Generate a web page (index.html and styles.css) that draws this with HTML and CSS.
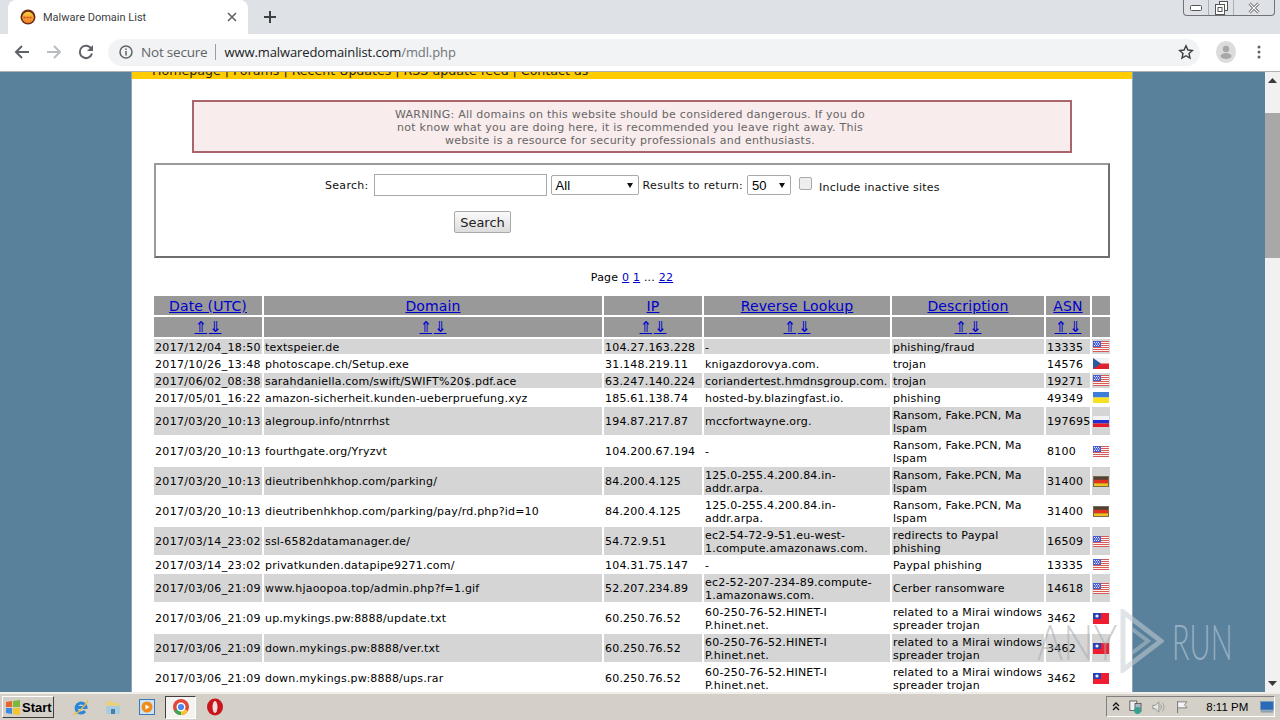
FILE: index.html
```html
<!DOCTYPE html>
<html lang="en">
<head>
<meta charset="utf-8">
<title>Malware Domain List</title>
<link rel="stylesheet" href="styles.css">
</head>
<body>
<svg class="defs" width="0" height="0">
  <defs>
    <linearGradient id="fav" x1="0" y1="0" x2="0" y2="1"><stop offset="0" stop-color="#f8d040"/><stop offset="1" stop-color="#ee7a28"/></linearGradient>
    <symbol id="us" viewBox="0 0 16 11"><rect width="16" height="11" fill="#f8f4f4"/><path d="M0 .5h16M0 2.500h16M0 4.500h16M0 6.500h16M0 8.500h16M0 10.500h16" stroke="#d85a58" stroke-width="1"/><rect width="8" height="6" fill="#4a5cd0"/><path d="M1 1.500h1M3 1.500h1M5 1.500h1M2 3h1M4 3h1M6 3h1M1 4.500h1M3 4.500h1M5 4.500h1" stroke="#e4e8ff"/></symbol>
    <symbol id="cz" viewBox="0 0 16 11"><rect width="16" height="5.500" fill="#f2f2f6"/><rect y="5.500" width="16" height="5.500" fill="#e0202c"/><path d="M0 0L8 5.500L0 11Z" fill="#2a5a9c"/></symbol>
    <symbol id="ua" viewBox="0 0 16 11"><rect width="16" height="5.500" fill="#3a80d8"/><rect y="5.500" width="16" height="5.500" fill="#f8e020"/></symbol>
    <symbol id="ru" viewBox="0 0 16 11"><rect width="16" height="4" fill="#f4f4f8"/><rect y="4" width="16" height="3.500" fill="#2030d0"/><rect y="7.500" width="16" height="3.500" fill="#e81c28"/></symbol>
    <symbol id="de" viewBox="0 0 16 11"><rect width="16" height="11" fill="#4a4436"/><rect y="3.700" width="16" height="3.600" fill="#e03020"/><rect y="7.300" width="16" height="3.700" fill="#f0c020"/><rect x=".5" y=".5" width="15" height="10" fill="none" stroke="#7a6a50"/></symbol>
    <symbol id="tw" viewBox="0 0 16 11"><rect width="16" height="11" fill="#f01c30"/><rect width="8" height="6" fill="#2a40b0"/><circle cx="4" cy="3" r="1.600" fill="#f0f0ff"/></symbol>
  </defs>
</svg>

<header class="chrome">
  <div class="tabstrip">
    <div class="tab">
      <svg class="favicon" width="16" height="16" viewBox="0 0 16 16"><circle cx="8" cy="8" r="7.500" fill="#6b2a12"/><circle cx="8" cy="8.500" r="5.800" fill="url(#fav)"/><path d="M3.500 8.500h9" stroke="#d63c20" stroke-width="1.500" stroke-dasharray="2 1"/></svg>
      <span class="tab-title">Malware Domain List</span>
      <svg class="tab-close" width="10" height="10" viewBox="0 0 10 10"><path d="M1 1l8 8M9 1l-8 8" stroke="#5f6368" stroke-width="1.600"/></svg>
    </div>
    <svg class="new-tab" width="12" height="12" viewBox="0 0 12 12"><path d="M6 0v12M0 6h12" stroke="#3c4043" stroke-width="2"/></svg>
    <div class="winctl">
      <span class="winbtn"><svg width="12" height="6" viewBox="0 0 12 6"><rect x=".5" y=".5" width="11" height="5" rx="1" fill="#fff" stroke="#555"/></svg></span>
      <span class="winbtn"><svg width="13" height="14" viewBox="0 0 13 14"><rect x="4.500" y=".5" width="8" height="9" fill="#fff" stroke="#555"/><rect x=".5" y="3.500" width="9" height="10" fill="#fff" stroke="#555"/><rect x="3" y="6.500" width="4" height="4" fill="none" stroke="#555"/></svg></span>
      <span class="winbtn winbtn-last"><svg width="12" height="12" viewBox="0 0 12 12"><path d="M1.500 1.500l9 9M10.500 1.500l-9 9" stroke="#555" stroke-width="2.800"/><path d="M1.500 1.500l9 9M10.500 1.500l-9 9" stroke="#fff" stroke-width="1.200"/></svg></span>
    </div>
  </div>
  <div class="toolbar">
    <svg class="tool" width="16" height="16" viewBox="0 0 16 16"><path d="M15 8H2M8 2L2 8l6 6" fill="none" stroke="#5f6368" stroke-width="2"/></svg>
    <svg class="tool" width="16" height="16" viewBox="0 0 16 16"><path d="M1 8h13M8 2l6 6-6 6" fill="none" stroke="#b9bcc0" stroke-width="2"/></svg>
    <svg class="tool" width="16" height="16" viewBox="0 0 16 16"><path d="M13.500 5A6.200 6.200 0 1 0 14 9.500" fill="none" stroke="#5f6368" stroke-width="2"/><path d="M15 1v6H9z" fill="#5f6368"/></svg>
    <div class="omnibox">
      <svg class="info" width="14" height="14" viewBox="0 0 14 14"><circle cx="7" cy="7" r="6" fill="none" stroke="#5f6368" stroke-width="1.500"/><path d="M7 6v4.500M7 3.500v1.500" stroke="#5f6368" stroke-width="1.500"/></svg>
      <span class="not-secure">Not secure</span>
      <span class="omni-sep"></span>
      <span class="url">www.malwaredomainlist.com<span class="url-path">/mdl.php</span></span>
      <svg class="star" width="16" height="16" viewBox="0 0 16 16"><path d="M8 1.800l1.900 4.200 4.500.5-3.400 3 1 4.500L8 11.700 4 14l1-4.500-3.400-3 4.500-.5z" fill="none" stroke="#3c4043" stroke-width="1.400"/></svg>
    </div>
    <svg class="avatar" width="20" height="22" viewBox="0 0 20 22"><ellipse cx="10" cy="11" rx="10" ry="11" fill="#dcdcdc"/><circle cx="10" cy="8" r="3.200" fill="#a8a8a8"/><ellipse cx="10" cy="15" rx="5.500" ry="3" fill="#a8a8a8"/></svg>
    <svg class="menu" width="4" height="14" viewBox="0 0 4 14"><circle cx="2" cy="2" r="1.500" fill="#5f6368"/><circle cx="2" cy="7" r="1.500" fill="#5f6368"/><circle cx="2" cy="12" r="1.500" fill="#5f6368"/></svg>
  </div>
</header>

<div class="viewport">
  <main class="page">
    <div class="wrapper">
      <nav class="nav"><div class="nav-text">Homepage | Forums | Recent Updates | RSS update feed | Contact us</div></nav>
      <div class="content">
        <div class="warning">WARNING: All domains on this website should be considered dangerous. If you do<br>not know what you are doing here, it is recommended you leave right away. This<br>website is a resource for security professionals and enthusiasts.</div>
        <form class="search-box">
          <div class="search-row">
            <label class="lbl">Search:</label>
            <input class="search-input" type="text">
            <span class="fake-select sel-all">All<i class="caret"></i></span>
            <label class="lbl">Results to return:</label>
            <span class="fake-select sel-num">50<i class="caret"></i></span>
            <span class="fake-check"></span>
            <label class="lbl lbl-inc">Include inactive sites</label>
          </div>
          <div class="search-btn-row"><button class="search-btn" type="button">Search</button></div>
        </form>
        <p class="pager">Page <a href="#">0</a> <a href="#">1</a> ... <a href="#">22</a></p>
        <table class="list">
          <colgroup><col class="c1"><col class="c2"><col class="c3"><col class="c4"><col class="c5"><col class="c6"><col class="c7"></colgroup>
          <tr class="head"><th><a href="#">Date (UTC)</a></th><th><a href="#">Domain</a></th><th><a href="#">IP</a></th><th><a href="#">Reverse Lookup</a></th><th><a href="#">Description</a></th><th><a href="#">ASN</a></th><th></th></tr>
          <tr class="sort"><th><a href="#">⇑</a> <a href="#">⇓</a></th><th><a href="#">⇑</a> <a href="#">⇓</a></th><th><a href="#">⇑</a> <a href="#">⇓</a></th><th><a href="#">⇑</a> <a href="#">⇓</a></th><th><a href="#">⇑</a> <a href="#">⇓</a></th><th><a href="#">⇑</a> <a href="#">⇓</a></th><th></th></tr>
          <tr class="alt"><td>2017/12/04_18:50</td><td>textspeier.de</td><td>104.27.163.228</td><td>-</td><td>phishing/fraud</td><td>13335</td><td class="fl"><svg class="flag"><use href="#us"/></svg></td></tr>
          <tr><td>2017/10/26_13:48</td><td>photoscape.ch/Setup.exe</td><td>31.148.219.11</td><td>knigazdorovya.com.</td><td>trojan</td><td>14576</td><td class="fl"><svg class="flag"><use href="#cz"/></svg></td></tr>
          <tr class="alt"><td>2017/06/02_08:38</td><td>sarahdaniella.com/swift/SWIFT%20$.pdf.ace</td><td>63.247.140.224</td><td>coriandertest.hmdnsgroup.com.</td><td>trojan</td><td>19271</td><td class="fl"><svg class="flag"><use href="#us"/></svg></td></tr>
          <tr><td>2017/05/01_16:22</td><td>amazon-sicherheit.kunden-ueberpruefung.xyz</td><td>185.61.138.74</td><td>hosted-by.blazingfast.io.</td><td>phishing</td><td>49349</td><td class="fl"><svg class="flag"><use href="#ua"/></svg></td></tr>
          <tr class="alt"><td>2017/03/20_10:13</td><td>alegroup.info/ntnrrhst</td><td>194.87.217.87</td><td>mccfortwayne.org.</td><td>Ransom, Fake.PCN, Ma<br>lspam</td><td>197695</td><td class="fl"><svg class="flag"><use href="#ru"/></svg></td></tr>
          <tr><td>2017/03/20_10:13</td><td>fourthgate.org/Yryzvt</td><td>104.200.67.194</td><td>-</td><td>Ransom, Fake.PCN, Ma<br>lspam</td><td>8100</td><td class="fl"><svg class="flag"><use href="#us"/></svg></td></tr>
          <tr class="alt"><td>2017/03/20_10:13</td><td>dieutribenhkhop.com/parking/</td><td>84.200.4.125</td><td>125.0-255.4.200.84.in-<br>addr.arpa.</td><td>Ransom, Fake.PCN, Ma<br>lspam</td><td>31400</td><td class="fl"><svg class="flag"><use href="#de"/></svg></td></tr>
          <tr><td>2017/03/20_10:13</td><td>dieutribenhkhop.com/parking/pay/rd.php?id=10</td><td>84.200.4.125</td><td>125.0-255.4.200.84.in-<br>addr.arpa.</td><td>Ransom, Fake.PCN, Ma<br>lspam</td><td>31400</td><td class="fl"><svg class="flag"><use href="#de"/></svg></td></tr>
          <tr class="alt"><td>2017/03/14_23:02</td><td>ssl-6582datamanager.de/</td><td>54.72.9.51</td><td>ec2-54-72-9-51.eu-west-<br>1.compute.amazonaws.com.</td><td>redirects to Paypal<br>phishing</td><td>16509</td><td class="fl"><svg class="flag"><use href="#us"/></svg></td></tr>
          <tr><td>2017/03/14_23:02</td><td>privatkunden.datapipe9271.com/</td><td>104.31.75.147</td><td>-</td><td>Paypal phishing</td><td>13335</td><td class="fl"><svg class="flag"><use href="#us"/></svg></td></tr>
          <tr class="alt"><td>2017/03/06_21:09</td><td>www.hjaoopoa.top/admin.php?f=1.gif</td><td>52.207.234.89</td><td>ec2-52-207-234-89.compute-<br>1.amazonaws.com.</td><td>Cerber ransomware</td><td>14618</td><td class="fl"><svg class="flag"><use href="#us"/></svg></td></tr>
          <tr><td>2017/03/06_21:09</td><td>up.mykings.pw:8888/update.txt</td><td>60.250.76.52</td><td>60-250-76-52.HINET-I<br>P.hinet.net.</td><td>related to a Mirai windows<br>spreader trojan</td><td>3462</td><td class="fl"><svg class="flag"><use href="#tw"/></svg></td></tr>
          <tr class="alt"><td>2017/03/06_21:09</td><td>down.mykings.pw:8888/ver.txt</td><td>60.250.76.52</td><td>60-250-76-52.HINET-I<br>P.hinet.net.</td><td>related to a Mirai windows<br>spreader trojan</td><td>3462</td><td class="fl"><svg class="flag"><use href="#tw"/></svg></td></tr>
          <tr><td>2017/03/06_21:09</td><td>down.mykings.pw:8888/ups.rar</td><td>60.250.76.52</td><td>60-250-76-52.HINET-I<br>P.hinet.net.</td><td>related to a Mirai windows<br>spreader trojan</td><td>3462</td><td class="fl"><svg class="flag"><use href="#tw"/></svg></td></tr>
        </table>
      </div>
    </div>
  </main>
  <div class="scrollbar">
    <div class="arrow"><svg width="9" height="5" viewBox="0 0 9 5"><path d="M4.500 0L9 5H0z" fill="#3a3a3a"/></svg></div>
    <div class="track"><div class="thumb"></div></div>
    <div class="arrow"><svg width="9" height="5" viewBox="0 0 9 5"><path d="M4.500 5L9 0H0z" fill="#3a3a3a"/></svg></div>
  </div>
  <div class="watermark">
    <span class="wm-any">ANY</span>
    <svg class="wm-play" width="44" height="64" viewBox="0 0 44 64"><path d="M3 3L41 32 3 61Z" fill="none" stroke="#c6ced3" stroke-opacity=".55" stroke-width="5"/><path d="M12 20L28 32 12 44" fill="none" stroke="#c6ced3" stroke-opacity=".45" stroke-width="4"/></svg>
    <span class="wm-run">RUN</span>
  </div>
</div>

<footer class="taskbar">
  <button class="start" type="button"><svg width="16" height="15" viewBox="0 0 16 15"><path d="M1 2l6-1v6H1z" fill="#e8642c"/><path d="M8 1l7-1v7H8z" fill="#7cb83c"/><path d="M1 8h6v6l-6-1z" fill="#3a8ce0"/><path d="M8 8h7v7l-7-1z" fill="#f4c430"/></svg><span>Start</span></button>
  <div class="quick">
    <svg class="qi qi-ie" width="16" height="18" viewBox="0 0 16 18"><path d="M3.500 9.500h9.500A5 5 0 1 0 12 13" fill="none" stroke="#2a86d8" stroke-width="3"/><path d="M0 16C3 17 12 9 15 2" fill="none" stroke="#e8c040" stroke-width="1.500"/></svg>
    <svg class="qi qi-folder" width="16" height="18" viewBox="0 0 16 18"><path d="M1 3h6l2 2h6v11H1z" fill="#e8d080"/><rect x="1" y="8" width="14" height="8" fill="#a8cce0"/><rect x="6" y="11" width="4" height="5" fill="#4a80a8"/></svg>
    <svg class="qi qi-media" width="16" height="16" viewBox="0 0 16 16"><rect x=".5" y=".5" width="15" height="15" fill="#cfe2f2" stroke="#3a7ab8"/><circle cx="8" cy="8" r="5.500" fill="#f08c1c"/><path d="M6.500 5.500l4 2.500-4 2.500z" fill="#fff"/></svg>
    <span class="qi-active"><svg width="16" height="16" viewBox="0 0 16 16"><circle cx="8" cy="8" r="8" fill="#e0483c"/><path d="M8 8L1 12A8 8 0 0 0 8 16z" fill="#3aa856"/><path d="M8 8l7 4a8 8 0 0 1-7 4z" fill="#f7c52c"/><circle cx="8" cy="8" r="3.800" fill="#4a8af0" stroke="#fff" stroke-width="1.400"/></svg></span>
    <svg class="qi" width="16" height="18" viewBox="0 0 16 18"><ellipse cx="8" cy="9" rx="8" ry="8.500" fill="#c8161c"/><ellipse cx="8" cy="9" rx="2.500" ry="6" fill="#f4dede"/></svg>
  </div>
  <div class="tray">
    <svg class="tray-up" width="8" height="10" viewBox="0 0 8 10"><path d="M1 4l3-3 3 3M1 8l3-3 3 3" fill="none" stroke="#111" stroke-width="1.300"/></svg>
    <svg width="16" height="16" viewBox="0 0 16 16"><rect x="1" y="1" width="8" height="11" fill="#f0f0f0" stroke="#555"/><rect x="7" y="4" width="7" height="9" fill="#a8b8c0" stroke="#555"/><circle cx="10" cy="12" r="4" fill="#38a090"/></svg>
    <svg width="16" height="16" viewBox="0 0 16 16"><path d="M1 6h3l4-4v12l-4-4H1z" fill="#e8e8e8" stroke="#8a8a8a"/><path d="M10 5q2 3 0 6M12 3q4 5 0 10" fill="none" stroke="#9a9a9a"/></svg>
    <svg width="16" height="16" viewBox="0 0 16 16"><path d="M3 1v14" stroke="#666"/><path d="M3 2h11l-3 3 3 4H3z" fill="#f4f4f4" stroke="#777"/></svg>
    <span class="clock">8:11 PM</span>
    <svg width="16" height="14" viewBox="0 0 16 14"><rect x=".5" y=".5" width="15" height="10" fill="#2a6ab8" stroke="#7a9ab8"/><rect x="1" y="11" width="14" height="2.500" fill="#8aa0b0"/></svg>
  </div>
</footer>
</body>
</html>
```

FILE: styles.css
```css
* { box-sizing: border-box; }
html, body { margin: 0; height: 720px; overflow: hidden; }
body { display: flex; flex-direction: column; font-family: "DejaVu Sans", Verdana, sans-serif; font-size: 11px; color: #000; }
.defs { display: block; height: 0; position: absolute; }

.chrome { flex: none; height: 72px; font-family: "Open Sans", "Liberation Sans", sans-serif; border-bottom: 1px solid #b0b2b6; }
.tabstrip { height: 34px; background: #dee1e6; display: flex; align-items: center; position: relative; padding-left: 8px; }
.tab { width: 240px; height: 34px; background: #fff; border-radius: 8px 8px 0 0; display: flex; align-items: center; padding: 0 0 0 12px; }
.favicon { flex: none; }
.tab-title { margin-left: 7px; width: 184px; font: 11px Roboto, sans-serif; color: #3c4043; white-space: nowrap; }
.tab-close { flex: none; }
.new-tab { margin-left: 16px; flex: none; }
.winctl { position: absolute; left: 1183px; top: 0; width: 92px; height: 16px; display: flex; border: 1px solid #6f7378; border-top: 0; border-radius: 0 0 4px 4px; }
.winbtn { width: 25px; display: flex; align-items: center; justify-content: center; border-right: 1px solid #aab0b8; }
.winbtn-last { flex: 1; border-right: 0; }
.toolbar { height: 37px; background: #fff; display: flex; align-items: center; padding: 0 13px 1px 14px; }
.tool { flex: none; margin-right: 16px; }
.omnibox { width: 1092px; margin-left: -2px; height: 27px; border-radius: 14px; background: #f1f3f4; display: flex; align-items: center; padding: 0 6px 0 11px; }
.info { flex: none; }
.not-secure { margin-left: 8px; font-size: 13.500px; color: #5f6368; letter-spacing: -.2px; white-space: nowrap; }
.omni-sep { width: 1px; height: 16px; background: #9a9da1; margin: 0 8px; flex: none; }
.url { font-size: 13px; color: #202124; white-space: nowrap; flex: 1; letter-spacing: -.1px; }
.url-path { color: #70757a; }
.star { flex: none; }
.avatar { flex: none; margin-left: 16px; }
.menu { flex: none; margin-left: 21px; }

.viewport { flex: none; height: 620px; display: flex; background: #5a819b; position: relative; overflow: hidden; }
.page { flex: 1; min-width: 0; overflow: hidden; }
.wrapper { width: 1000px; margin: 0 0 0 132px; background: #fff; min-height: 100%; box-shadow: 0 0 0 1px #8aa5b8; }
.nav { height: 7px; background: #ffcc00; overflow: hidden; }
.nav-text { margin-top: -9px; padding-left: 20px; font-size: 12.600px; line-height: 16px; white-space: nowrap; color: #222; }
.content { padding: 21px 22px 0; }

.warning { width: 880px; height: 53px; margin-left: 38px; border: 2px solid #a9656c; background: #f9eced; color: #666; text-align: center; line-height: 13px; padding: 6px 4px 0 0; letter-spacing: .265px; white-space: nowrap; }
.search-box { margin-top: 10px; height: 95px; border: 2px solid #7f7f7f; border-color: #9a9a9a #6f6f6f #6f6f6f #9a9a9a; padding-top: 9px; }
.search-row { display: flex; align-items: center; padding-left: 169px; height: 22px; }
.lbl { color: #111; white-space: nowrap; letter-spacing: .3px; }
.search-input { width: 173px; height: 22px; margin: 0 4px 0 5px; border: 1px solid #a9a9a9; background: #fff; padding: 0; }
.fake-select { display: flex; align-items: center; position: relative; height: 20px; border: 1px solid #a9a9a9; border-radius: 2px; background: #fff; font: 13px "Liberation Sans", sans-serif; padding-left: 4px; margin-right: 4px; }
.sel-all { width: 88px; }
.sel-num { width: 44px; margin-left: 4px; }
.caret { position: absolute; right: 5px; top: 7px; border: 3.500px solid transparent; border-top: 5px solid #111; border-bottom: 0; }
.fake-check { width: 13px; height: 13px; margin: -4px 7px 0 4px; border: 1px solid #aaa; border-radius: 2px; background: #eee; flex: none; }
.lbl-inc { margin-top: 5px; letter-spacing: .2px; }
.search-btn-row { margin-top: 15px; padding-left: 298px; }
.search-btn { width: 57px; height: 22px; border: 1px solid #a9a9a9; border-radius: 2px; background: linear-gradient(#fafafa, #dcdcdc); font: 13px "DejaVu Sans", sans-serif; color: #222; padding: 0; }
.pager { margin: 13px 0 0; height: 13px; line-height: 13px; text-align: center; letter-spacing: .22px; }
a { color: #0000cc; }

.list { margin: 10px -2px 0; width: 960px; table-layout: fixed; border-collapse: separate; border-spacing: 2px; }
.c1 { width: 108px; } .c2 { width: 338px; } .c3 { width: 98px; } .c4 { width: 186px; } .c5 { width: 152px; } .c6 { width: 44px; } .c7 { width: 18px; }
th { background: #999; font-weight: normal; text-align: center; padding: 0; }
.head th { height: 19px; font-size: 14px; line-height: 17px; padding-top: 2px; letter-spacing: .12px; }
.sort th { height: 20px; font-size: 15px; line-height: 20px; word-spacing: -3px; }
td { padding: 2px 1px 0; line-height: 13px; white-space: nowrap; overflow: hidden; letter-spacing: .2px; }
tr:has(br) td:not(:has(br)) { padding: 1px; }
td:nth-child(1) { letter-spacing: .33px; }
td:nth-child(5) { letter-spacing: .16px; }
td:nth-child(6) { letter-spacing: .25px; }
.alt td { background: #d5d5d5; }
td.fl, tr:has(br) td.fl { padding: 0 1px; }
.flag { display: block; width: 16px; height: 11px; }

.scrollbar { flex: none; width: 15px; background: #f1f1f1; display: flex; flex-direction: column; }
.arrow { height: 17px; display: flex; align-items: center; justify-content: center; flex: none; }
.track { flex: 1; padding-top: 24px; }
.thumb { height: 145px; background: #a8a8a8; }

.watermark { position: absolute; left: 1037px; top: 537px; width: 195px; height: 64px; display: flex; align-items: center; font-family: "Lato", sans-serif; font-weight: 300; font-size: 50px; }
.wm-any { width: 83px; flex: none; color: rgba(165, 168, 172, .55); transform: scaleX(.8); transform-origin: left center; white-space: nowrap; }
.wm-play { flex: none; }
.wm-run { flex: none; margin-left: 8px; width: 58px; color: rgba(200, 215, 225, .55); transform: scaleX(.58); transform-origin: left center; white-space: nowrap; }

.taskbar { flex: none; height: 28px; background: #d4d0c8; border-top: 2px solid #f0eeea; display: flex; align-items: center; position: relative; padding-left: 2px; }
.start { width: 52px; height: 22px; padding: 0 0 0 2px; display: flex; align-items: center; gap: 1px; background: #d4d0c8; border: 1px solid; border-color: #fff #404040 #404040 #fff; font: bold 13px "Liberation Sans", sans-serif; color: #000; }
.quick { display: flex; align-items: center; margin-left: 19px; }
.qi { flex: none; }
.qi-ie { margin-right: 16px; }
.qi-folder { margin-right: 18px; }
.qi-media { margin-right: 10px; }
.qi-active { width: 31px; height: 23px; background: #f4f3f0; border: 1px solid; border-color: #404040 #fff #fff #404040; display: flex; align-items: center; justify-content: center; margin-right: 11px; }
.tray { position: absolute; left: 1106px; top: 2px; width: 169px; height: 21px; border: 1px solid; border-color: #808080 #fff #fff #808080; display: flex; align-items: center; padding-left: 5px; gap: 9px; }
.tray-up { flex: none; }
.clock { font: 11.500px "Liberation Sans", sans-serif; margin-left: 9px; margin-right: 3px; white-space: nowrap; }
```
